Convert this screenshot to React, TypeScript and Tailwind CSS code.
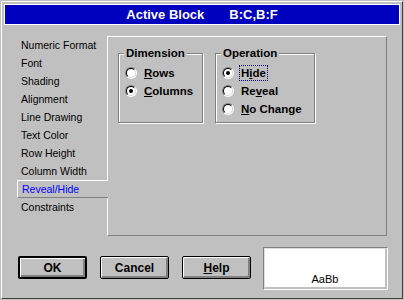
const tabs = [
  "Numeric Format",
  "Font",
  "Shading",
  "Alignment",
  "Line Drawing",
  "Text Color",
  "Row Height",
  "Column Width",
  "Reveal/Hide",
  "Constraints",
];

function Radio({ checked }: { checked?: boolean }) {
  return (
    <span className="relative flex-none w-[12px] h-[12px] rounded-full border border-t-[#808080] border-l-[#808080] border-r-white border-b-white">
      <span className="absolute inset-0 rounded-full border border-t-black border-l-black border-r-[#dfdfdf] border-b-[#dfdfdf] bg-white flex items-center justify-center">
        {checked && <span className="w-[4px] h-[4px] rounded-full bg-black" />}
      </span>
    </span>
  );
}

function Option({
  checked,
  focused,
  children,
}: {
  checked?: boolean;
  focused?: boolean;
  children: React.ReactNode;
}) {
  return (
    <div className="flex items-center h-[18px]">
      <Radio checked={checked} />
      <span
        className={
          focused
            ? "ml-[5px] px-px leading-[14px] border border-dotted border-[#000080]"
            : "ml-[5px] px-px leading-[14px] border border-transparent"
        }
      >
        {children}
      </span>
    </div>
  );
}

function Group({ title, width, children }: { title: string; width: string; children: React.ReactNode }) {
  return (
    <div
      className={`relative ${width} h-[70px] border border-[#808080] shadow-[inset_1px_1px_0_#fff,1px_1px_0_#fff] pt-[10px] pl-[6px] font-bold text-[11.5px] text-black`}
    >
      <span className="absolute left-[5px] -top-[8px] px-[2px] bg-[#c0c0c0] leading-[14px]">{title}</span>
      {children}
    </div>
  );
}

function Button({ label, isDefault }: { label: React.ReactNode; isDefault?: boolean }) {
  return (
    <button
      className={
        isDefault
          ? "w-[69px] h-[23px] rounded-[2px] border-2 border-black bg-[#c0c0c0] shadow-[inset_1px_1px_0_#fff,inset_-2px_-2px_0_#808080] font-bold text-[12px] text-black leading-none"
          : "w-[69px] h-[23px] rounded-[2px] border border-black bg-[#c0c0c0] shadow-[inset_1px_1px_0_#fff,inset_-2px_-2px_0_#808080] font-bold text-[12px] text-black leading-none"
      }
    >
      {label}
    </button>
  );
}

export default function App() {
  return (
    <div className="w-[404px] h-[300px] bg-[#c0c0c0] p-px font-['Liberation_Sans',Arial,sans-serif]">
      <div className="h-full w-full border border-t-white border-l-white border-r-[#404040] border-b-[#404040] p-[2px] flex flex-col">
        <div className="h-[21px] flex-none border border-white bg-[#0000bf] flex items-center justify-center gap-[25px] text-white font-bold text-[13px] leading-none">
          <span>Active Block</span>
          <span>B:C,B:F</span>
        </div>

        <div className="flex mt-[11px]">
          <div className="w-[103px] flex flex-col">
            {tabs.map((t) =>
              t === "Reveal/Hide" ? (
                <div
                  key={t}
                  className="relative z-10 ml-[13px] -mr-px h-[18px] border-t border-l border-b border-t-white border-l-white border-b-[#808080] bg-[#c0c0c0] pl-[4px] text-[10.5px] leading-[16px] text-[#0000ff]"
                >
                  {t}
                </div>
              ) : (
                <div
                  key={t}
                  className="ml-[13px] -mr-px h-[18px] border-t border-l border-b border-transparent pl-[3px] text-[10.5px] leading-[16px] text-black"
                >
                  {t}
                </div>
              ),
            )}
          </div>

          <div className="w-[280px] h-[200px] border border-t-white border-l-white border-r-[#808080] border-b-[#808080] flex items-start pl-[10px] pt-[16px] gap-[12px]">
            <Group title="Dimension" width="w-[85px]">
              <Option>
                <u>R</u>ows
              </Option>
              <Option checked>
                <u>C</u>olumns
              </Option>
            </Group>
            <Group title="Operation" width="w-[100px]">
              <Option checked focused>
                H<u>i</u>de
              </Option>
              <Option>
                Re<u>v</u>eal
              </Option>
              <Option>
                <u>N</u>o Change
              </Option>
            </Group>
          </div>
        </div>

        <div className="flex items-start mt-[11px]">
          <div className="flex gap-[13px] ml-[14px] mt-[9px]">
            <Button label="OK" isDefault />
            <Button label="Cancel" />
            <Button
              label={
                <>
                  <u>H</u>elp
                </>
              }
            />
          </div>
          <div className="ml-[12px] w-[125px] h-[43px] border border-t-[#808080] border-l-[#808080] border-r-white border-b-white">
            <div className="h-full border border-t-[#dfdfdf] border-l-[#dfdfdf] border-r-[#c0c0c0] border-b-[#c0c0c0] border-r-2 border-b-2 bg-white flex items-end justify-center pb-px text-[11px] leading-[13px] text-black">
              AaBb
            </div>
          </div>
        </div>
      </div>
    </div>
  );
}
